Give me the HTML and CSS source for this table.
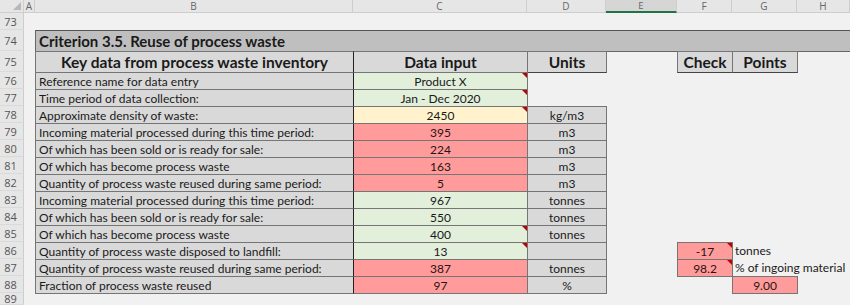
FILE: index.html
```html
<!DOCTYPE html>
<html>
<head>
<meta charset="utf-8">
<link rel="stylesheet" href="styles.css">
</head>
<body>
<div class="sheet">
  <div class="corner"><span class="tri"></span></div>
  <div class="ch">A</div>
  <div class="ch">B</div>
  <div class="ch">C</div>
  <div class="ch">D</div>
  <div class="ch sel">E</div>
  <div class="ch">F</div>
  <div class="ch">G</div>
  <div class="ch">H</div>

  <div class="rn">73</div><div class="blank span-rest"></div>

  <div class="rn">74</div><div class="blank"></div>
  <div class="title">Criterion 3.5. Reuse of process waste</div>

  <div class="rn">75</div><div class="blank"></div>
  <div class="c hd gray">Key data from process waste inventory</div>
  <div class="c hd gray dl">Data input</div>
  <div class="c hd gray">Units</div>
  <div class="blank"></div>
  <div class="c hd gray">Check</div>
  <div class="c hd gray">Points</div>
  <div class="blank"></div>

  <div class="rn">76</div><div class="blank"></div>
  <div class="c lbl gray">Reference name for data entry</div>
  <div class="c val green dl note">Product X</div>
  <div class="blank"></div><div class="blank"></div><div class="blank"></div><div class="blank"></div><div class="blank"></div>

  <div class="rn">77</div><div class="blank"></div>
  <div class="c lbl gray">Time period of data collection:</div>
  <div class="c val green dl note">Jan - Dec 2020</div>
  <div class="blank"></div><div class="blank"></div><div class="blank"></div><div class="blank"></div><div class="blank"></div>

  <div class="rn">78</div><div class="blank"></div>
  <div class="c lbl gray db">Approximate density of waste:</div>
  <div class="c val yellow dl db note">2450</div>
  <div class="c val gray db">kg/m3</div>
  <div class="blank"></div><div class="blank"></div><div class="blank"></div><div class="blank"></div>

  <div class="rn">79</div><div class="blank"></div>
  <div class="c lbl gray">Incoming material processed during this time period:</div>
  <div class="c val red dl">395</div>
  <div class="c val gray">m3</div>
  <div class="blank"></div><div class="blank"></div><div class="blank"></div><div class="blank"></div>

  <div class="rn">80</div><div class="blank"></div>
  <div class="c lbl gray">Of which has been sold or is ready for sale:</div>
  <div class="c val red dl">224</div>
  <div class="c val gray">m3</div>
  <div class="blank"></div><div class="blank"></div><div class="blank"></div><div class="blank"></div>

  <div class="rn">81</div><div class="blank"></div>
  <div class="c lbl gray">Of which has become process waste</div>
  <div class="c val red dl">163</div>
  <div class="c val gray">m3</div>
  <div class="blank"></div><div class="blank"></div><div class="blank"></div><div class="blank"></div>

  <div class="rn">82</div><div class="blank"></div>
  <div class="c lbl gray">Quantity of process waste reused during same period:</div>
  <div class="c val red dl">5</div>
  <div class="c val gray">m3</div>
  <div class="blank"></div><div class="blank"></div><div class="blank"></div><div class="blank"></div>

  <div class="rn">83</div><div class="blank"></div>
  <div class="c lbl gray">Incoming material processed during this time period:</div>
  <div class="c val green dl">967</div>
  <div class="c val gray">tonnes</div>
  <div class="blank"></div><div class="blank"></div><div class="blank"></div><div class="blank"></div>

  <div class="rn">84</div><div class="blank"></div>
  <div class="c lbl gray">Of which has been sold or is ready for sale:</div>
  <div class="c val green dl">550</div>
  <div class="c val gray">tonnes</div>
  <div class="blank"></div><div class="blank"></div><div class="blank"></div><div class="blank"></div>

  <div class="rn">85</div><div class="blank"></div>
  <div class="c lbl gray">Of which has become process waste</div>
  <div class="c val green dl note">400</div>
  <div class="c val gray">tonnes</div>
  <div class="blank"></div><div class="blank"></div><div class="blank"></div><div class="blank"></div>

  <div class="rn">86</div><div class="blank"></div>
  <div class="c lbl gray">Quantity of process waste disposed to landfill:</div>
  <div class="c val green dl note">13</div>
  <div class="c val gray"></div>
  <div class="blank"></div>
  <div class="c val red note">-17</div>
  <div class="plain">tonnes</div>
  <div class="blank"></div>

  <div class="rn">87</div><div class="blank"></div>
  <div class="c lbl gray">Quantity of process waste reused during same period:</div>
  <div class="c val red dl">387</div>
  <div class="c val gray">tonnes</div>
  <div class="blank"></div>
  <div class="c val red note">98.2</div>
  <div class="plain span2">% of ingoing material</div>

  <div class="rn">88</div><div class="blank"></div>
  <div class="c lbl gray">Fraction of process waste reused</div>
  <div class="c val red dl">97</div>
  <div class="c val gray">%</div>
  <div class="blank"></div>
  <div class="blank"></div>
  <div class="c val red">9.00</div>
  <div class="blank"></div>

  <div class="rn last">89</div><div class="blank span-rest"></div>
</div>
</body>
</html>
```
FILE: styles.css
```css
html, body {
  margin: 0;
  padding: 0;
  background: #f1f1f1;
}
body {
  font-family: Lato, "Open Sans", sans-serif;
  color: #1a1a1a;
  width: 850px;
  height: 305px;
  overflow: hidden;
}
.sheet {
  display: grid;
  grid-template-columns: 24px 11px 318px 174px 79px 71px 55px 65px 1fr;
  grid-template-rows: 13px 17px 21px 21px repeat(13, 17px) 12px;
  width: 850px;
}
.corner {
  background: #e6e6e6;
  border-right: 1px solid #cfcfcf;
  border-bottom: 1px solid #cfcfcf;
  position: relative;
}
.corner .tri {
  position: absolute;
  right: 2px;
  bottom: 2px;
  width: 0;
  height: 0;
  border-left: 8px solid transparent;
  border-bottom: 8px solid #b8b8b8;
}
.ch {
  background: #e6e6e6;
  color: #666;
  font-size: 10px;
  line-height: 12px;
  text-align: center;
  border-right: 1px solid #cdcdcd;
  border-bottom: 1px solid #cdcdcd;
  font-family: "Open Sans", sans-serif;
  overflow: hidden;
}
.ch.sel {
  background: #d6d6d6;
  border-bottom: 2px solid #217346;
  line-height: 11px;
  font-size: 9.5px;
}
.rn {
  background: #e6e6e6;
  color: #555;
  font-size: 11px;
  font-family: "Open Sans", sans-serif;
  text-align: center;
  border-right: 1px solid #cdcdcd;
  border-bottom: 1px solid #dadada;
  display: flex;
  align-items: center;
  justify-content: center;
  padding-right: 2px;
}
.rn.last {
  align-items: flex-start;
  line-height: 12px;
  overflow: hidden;
}
.blank { }
.span-rest { grid-column: 2 / -1; }
.span2 { grid-column: span 2; }

.title {
  grid-column: 3 / -1;
  background: #bfbfbf;
  border-top: 1px solid #555;
  border-bottom: 1px solid #666;
  border-left: 1px solid #666;
  font-weight: 700;
  font-size: 15px;
  display: flex;
  align-items: center;
  padding-left: 3px;
  margin-bottom: -1px;
}
.c {
  border: 1px solid #757575;
  margin: 0 -1px -1px 0;
  display: flex;
  align-items: center;
  white-space: nowrap;
  overflow: hidden;
  font-size: 12px;
  position: relative;
}
.hd {
  font-weight: 700;
  font-size: 15.5px;
  justify-content: center;
  border-bottom-color: #444;
}
.lbl {
  padding-left: 3px;
}
.val {
  justify-content: center;
}
.gray { background: #d9d9d9; }
.green { background: #e2efda; }
.yellow { background: #fff2cc; }
.red { background: #ff9b9b; color: #2a1414; }
.dl { border-left-color: #222; }
.db { border-bottom-color: #222; }
.note::after {
  content: "";
  position: absolute;
  top: 0;
  right: 0;
  width: 0;
  height: 0;
  border-left: 5px solid transparent;
  border-top: 5px solid #c00000;
}
.plain {
  font-size: 12px;
  display: flex;
  align-items: center;
  padding-left: 3px;
  white-space: nowrap;
}
```
